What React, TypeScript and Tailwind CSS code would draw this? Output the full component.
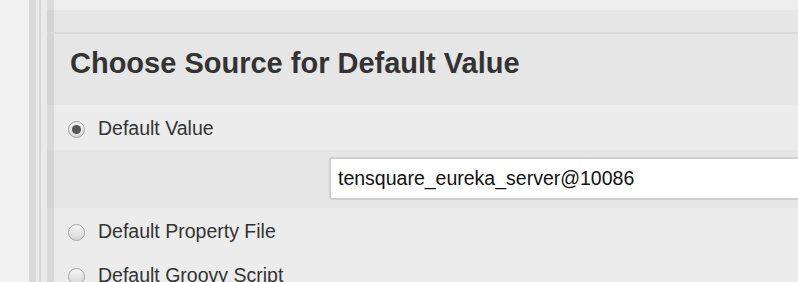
function Radio({ checked }: { checked?: boolean }) {
  return (
    <span className="flex h-[17px] w-[17px] shrink-0 items-center justify-center rounded-full border border-[#a4a4a4] bg-gradient-to-b from-[#f4f4f4] to-[#d8d8d8]">
      {checked && <span className="h-[9px] w-[9px] rounded-full bg-[#555]" />}
    </span>
  );
}

function Option({ label, checked }: { label: string; checked?: boolean }) {
  return (
    <div className="flex h-[44px] shrink-0 items-center gap-[13px] pl-[14px] text-[19.5px] text-[#333]">
      <Radio checked={checked} />
      <span>{label}</span>
    </div>
  );
}

export default function App() {
  return (
    <div
      className="flex h-[282px] w-[798px] overflow-hidden bg-[#f2f2f2]"
      style={{ fontFamily: '"Liberation Sans", Arial, sans-serif' }}
    >
      <div className="w-[29px] shrink-0 bg-[#f2f2f2]" />
      <div className="w-[7px] shrink-0 bg-[#d9d9d9]" />
      <div className="w-[3px] shrink-0 bg-[#ebebeb]" />
      <div className="w-[2px] shrink-0 bg-[#d6d6d6]" />
      <div className="w-[6px] shrink-0 bg-[#ebebeb]" />

      <div className="flex min-w-0 flex-1 flex-col">
        <div className="h-[10px] shrink-0 border-l-[7px] border-black/[0.08] bg-[#eeeeee]" />
        <div className="h-[22px] shrink-0 border-l-[7px] border-black/[0.08] bg-[#e6e6e6]" />
        <div className="h-[2px] shrink-0 bg-[#d9d9d9]" />
        <div className="h-[71px] shrink-0 border-l-[7px] border-black/[0.08] bg-[#e6e6e6] pl-[16px] pt-[13px]">
          <h2 className="text-[29px] font-bold leading-[32px] text-[#333]">
            Choose Source for Default Value
          </h2>
        </div>
        <div className="h-[45px] shrink-0 border-l-[7px] border-black/[0.08] bg-[#ececec] pt-[2px]">
          <Option label="Default Value" checked />
        </div>
        <div className="h-[58px] shrink-0 border-l-[7px] border-black/[0.08] bg-[#e6e6e6] pt-[7px]">
          <div className="ml-[275px] flex h-[43px] w-[520px] items-center rounded-[3px] border-2 border-[#cfcfcf] bg-white pl-[7px] text-[19.5px] text-[#111]">
            tensquare_eureka_server@10086
          </div>
        </div>
        <div className="flex-1 shrink-0 border-l-[7px] border-black/[0.08] bg-[#ececec] pt-[2px]">
          <Option label="Default Property File" />
          <Option label="Default Groovy Script" />
        </div>
      </div>
    </div>
  );
}
